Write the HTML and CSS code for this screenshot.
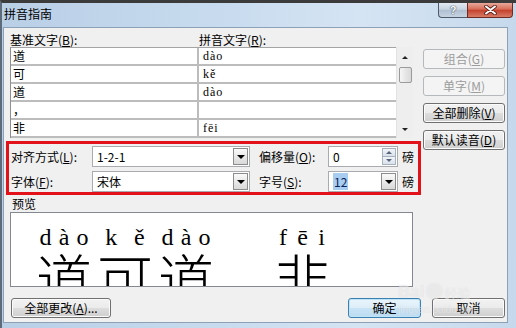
FILE: index.html
```html
<!DOCTYPE html>
<html lang="zh-CN">
<head>
<meta charset="utf-8">
<title>拼音指南</title>
<link rel="stylesheet" href="styles.css">
</head>
<body>
<div class="window">
  <div class="titlebar">
    <span class="title">拼音指南</span>
    <div class="caption">
      <div class="cap cap-help">?</div>
      <div class="cap cap-close">
        <svg width="13" height="10" viewBox="0 0 13 10">
          <path d="M2 1.5 L11 8.5 M11 1.5 L2 8.5" stroke="#5a2018" stroke-width="3.6" stroke-linecap="round"/>
          <path d="M2 1.5 L11 8.5 M11 1.5 L2 8.5" stroke="#ffffff" stroke-width="2" stroke-linecap="round"/>
        </svg>
      </div>
    </div>
  </div>
  <div class="frame">
    <div class="client">
      <div class="top">
        <div class="list-area">
          <div class="col-labels">
            <span class="lab-base">基准文字(<u>B</u>):</span>
            <span>拼音文字(<u>R</u>):</span>
          </div>
          <div class="list">
            <div class="cells">
              <div class="cell">道</div><div class="cell py">dào</div>
              <div class="cell">可</div><div class="cell py">kě</div>
              <div class="cell">道</div><div class="cell py">dào</div>
              <div class="cell">，</div><div class="cell py"></div>
              <div class="cell">非</div><div class="cell py">fēi</div>
            </div>
            <div class="vscroll">
              <div class="sb-up"><span class="tri-up"></span></div>
              <div class="sb-thumb"></div>
              <div class="sb-fill"></div>
              <div class="sb-down"><span class="tri-down"></span></div>
            </div>
          </div>
        </div>
        <div class="side">
          <div class="btn disabled">组合(<u>G</u>)</div>
          <div class="btn disabled">单字(<u>M</u>)</div>
          <div class="btn">全部删除(<u>V</u>)</div>
          <div class="btn">默认读音(<u>D</u>)</div>
        </div>
        <div class="options">
          <div class="opt-row">
            <span class="opt-label">对齐方式(<u>L</u>):</span>
            <div class="combo"><span class="combo-text">1-2-1</span><span class="drop"></span></div>
            <span class="opt-label2">偏移量(<u>O</u>):</span>
            <div class="spin"><span class="combo-text">0</span>
              <span class="spin-btns"><span class="sp"><span class="tri-s-up"></span></span><span class="sp"><span class="tri-s-down"></span></span></span>
            </div>
            <span class="unit">磅</span>
          </div>
          <div class="opt-row">
            <span class="opt-label">字体(<u>F</u>):</span>
            <div class="combo"><span class="combo-text">宋体</span><span class="drop"></span></div>
            <span class="opt-label2">字号(<u>S</u>):</span>
            <div class="spin"><span class="combo-text"><span class="sel">12</span></span><span class="drop"></span></div>
            <span class="unit">磅</span>
          </div>
          <div class="redbox"></div>
        </div>
      </div>
      <div class="preview-label">预览</div>
      <div class="preview">
        <div class="ruby-line">
          <div class="rb"><div class="rt"><span>d</span><span>à</span><span>o</span></div><div class="rc">道</div></div>
          <div class="rb"><div class="rt"><span>k</span><span>ě</span></div><div class="rc">可</div></div>
          <div class="rb"><div class="rt"><span>d</span><span>à</span><span>o</span></div><div class="rc">道</div></div>
          <div class="rb comma"><div class="rt"></div><div class="rc">，</div></div>
          <div class="rb"><div class="rt"><span>f</span><span>ē</span><span>i</span></div><div class="rc">非</div></div>
        </div>
      </div>
      <div class="bottom">
        <div class="btn btn-all">全部更改(<u>A</u>)...</div>
        <div class="btn btn-ok">确定</div>
        <div class="btn btn-cancel">取消</div>
      </div>
    </div>
  </div>
  <div class="watermark">
    <div class="wm-top"><span class="wm-bai">Bai</span><span class="wm-paw">●</span><span class="wm-jy">经验</span></div>
    <div class="wm-url">jingyan.baidu.com</div>
  </div>
</div>
</body>
</html>
```
FILE: styles.css
```css
* { box-sizing: border-box; }
html, body { margin: 0; padding: 0; }
body {
  width: 516px; height: 328px; overflow: hidden;
  background: #c4d7eb;
  font-family: "Noto Sans CJK SC", "Noto Sans", sans-serif;
  font-size: 12px; color: #000;
}
u { text-decoration: underline; text-underline-offset: 1px; }

.window {
  position: relative;
  width: 516px; height: 328px;
  display: flex; flex-direction: column;
  border-top: 3px solid #3b3b3b;
  border-left: 2px solid #5d6b7a;
  background: linear-gradient(90deg, #b9cfe6 0%, #c9dcef 45%, #d5e4f3 70%, #c6d9ec 100%);
}

/* title bar */
.titlebar { height: 24px; display: flex; justify-content: space-between; align-items: flex-start; }
.title { padding: 4px 0 0 2px; line-height: 14px; color: #000; }
.caption { display: flex; margin-right: 3px; }
.cap { height: 15px; display: flex; align-items: center; justify-content: center; }
.cap-help {
  width: 29px;
  border: 1px solid #4c5a6c; border-top: none; border-right: none;
  border-radius: 0 0 0 4px;
  background: linear-gradient(#e2e9f1, #c8d4e1 45%, #afbfd1 50%, #c6d3e1);
  font-family: "Liberation Sans", sans-serif; font-weight: bold; font-size: 11px;
  color: #fff; text-shadow: 0 0 1px #2f3c4c, 0 0 1px #2f3c4c;
  line-height: 15px;
}
.cap-close {
  width: 46px;
  border: 1px solid #6e2b21; border-top: none;
  border-radius: 0 0 4px 0;
  background: linear-gradient(#e8a99c, #d76c57 45%, #c4402b 50%, #d77c66);
}

/* frame */
.frame { flex: 1; display: flex; padding: 0 8px 5px 1px; }
.client {
  flex: 1;
  background: #f0f0f0;
  border: 1px solid #8da1b6;
  padding: 4px 2px 0 6px;
  display: flex; flex-direction: column;
}

/* top section */
.top {
  display: grid;
  grid-template-columns: 406px 82px;
  column-gap: 7px;
}
.list-area { grid-column: 1; grid-row: 1; }
.col-labels { display: flex; height: 15px; line-height: 15px; }
.lab-base { width: 189px; }

.list { display: flex; width: 403px; height: 91px; }
.cells {
  width: 386px; height: 91px;
  display: grid;
  grid-template-columns: 186px 197px;
  grid-auto-rows: 16px;
  gap: 2px;
  background: #bcbcbc;
  border-left: 1px solid #8f8f8f;
  border-top: 1px solid #a4a4a4;
  padding-bottom: 2px;
}
.cell { background: #fff; line-height: 16px; padding-left: 2px; white-space: nowrap; }
.cell.py { font-family: "Liberation Serif", serif; font-size: 12px; padding-left: 4px; letter-spacing: 1px; }

.vscroll {
  width: 17px; height: 91px;
  display: flex; flex-direction: column;
  background: #eeeeee;
  border-left: 1px solid #e2e2e2;
}
.sb-up { height: 20px; display: flex; align-items: center; justify-content: center; }
.sb-down { height: 17px; display: flex; align-items: center; justify-content: center; }
.sb-fill { flex: 1; }
.sb-thumb {
  height: 16px; margin: 0 1px 0 2px;
  border: 1px solid #9a9a9a; border-radius: 2px;
  background: linear-gradient(90deg, #f6f6f6, #e6e6e6 50%, #d9d9d9);
}
.tri-up { width: 0; height: 0; border-left: 3px solid transparent; border-right: 3px solid transparent; border-bottom: 3px solid #222; }
.tri-down { width: 0; height: 0; border-left: 3px solid transparent; border-right: 3px solid transparent; border-top: 3px solid #222; }

.side {
  grid-column: 2; grid-row: 1 / 3;
  display: flex; flex-direction: column; gap: 7px;
  padding-top: 17px;
}

/* buttons */
.btn {
  height: 20px;
  border: 1px solid #707070; border-radius: 3px;
  background: linear-gradient(#f2f2f2 0%, #ebebeb 50%, #dddddd 50%, #cfcfcf 100%);
  box-shadow: inset 0 0 0 1px #fbfbfb;
  line-height: 18px; text-align: center; white-space: nowrap;
}
.btn.disabled {
  border-color: #b5b9bc;
  background: #f4f4f4;
  box-shadow: none;
  color: #9c9c9c;
}

/* options */
.options { grid-column: 1; grid-row: 2; margin-top: 8px; position: relative; display: flex; flex-direction: column; gap: 4px; }
.opt-row { display: flex; align-items: center; height: 21px; }
.opt-label { width: 82px; padding-left: 1px; line-height: 15px; }
.opt-label2 { width: 78px; padding-left: 9px; line-height: 15px; }
.combo, .spin {
  height: 21px;
  display: flex; align-items: center;
  background: #fff;
  border: 1px solid #a9abb0;
}
.combo { width: 158px; }
.spin { width: 70px; }
.combo-text { padding-left: 4px; line-height: 15px; }
.sel { background: #a9cdf1; color: #0b2357; padding: 0 1px; }
.drop {
  width: 15px; height: 17px; margin: 0 1px 0 auto;
  border: 1px solid #8c8c8c;
  background: linear-gradient(#fafafa, #e9e9e9 50%, #d9d9d9);
  display: flex; align-items: center; justify-content: center;
}
.drop::after {
  content: ""; width: 0; height: 0;
  border-left: 4px solid transparent; border-right: 4px solid transparent;
  border-top: 4px solid #000;
  margin-top: 1px;
}
.spin-btns {
  width: 14px; height: 17px; margin: 0 1px 0 auto;
  display: flex; flex-direction: column;
  border: 1px solid #a7b2bf;
}
.sp {
  flex: 1; display: flex; align-items: center; justify-content: center;
  background: linear-gradient(#f2f5f9, #d9e1ea);
}
.sp + .sp { border-top: 1px solid #a7b2bf; }
.tri-s-up { width: 0; height: 0; border-left: 3px solid transparent; border-right: 3px solid transparent; border-bottom: 3px solid #56657a; }
.tri-s-down { width: 0; height: 0; border-left: 3px solid transparent; border-right: 3px solid transparent; border-top: 3px solid #56657a; }
.unit { margin-left: 4px; line-height: 15px; }

.redbox {
  position: absolute;
  left: -4px; top: -5px;
  width: 415px; height: 54px;
  border: 3px solid #e3121a;
  pointer-events: none;
}

/* preview */
.preview-label { margin-top: 4px; height: 16px; line-height: 16px; padding-left: 2px; }
.preview {
  width: 403px; height: 75px;
  background: #fff;
  border: 1px solid #828790;
  overflow: hidden;
  padding: 12px 0 0 25px;
}
.ruby-line { display: flex; gap: 5px; }
.rb { width: 56px; display: flex; flex-direction: column; }
.rb.comma { width: 50px; }
.rt {
  height: 24px; line-height: 24px;
  display: flex; justify-content: space-around;
  font-family: "Liberation Serif", serif; font-size: 24px;
}
.rc {
  height: 37px; overflow: hidden;
  line-height: 56px;
  font-size: 56px;
  font-weight: 300;
  font-family: "Noto Sans CJK SC Light", "Noto Sans CJK SC", sans-serif;
}

/* bottom buttons */
.bottom { display: flex; margin-top: 11px; gap: 11px; }
.btn-all { width: 100px; margin-left: 1px; }
.btn-ok {
  width: 73px; margin-left: auto;
  border-color: #3c7fb1;
  box-shadow: inset 0 0 0 1px #bfe3f7;
  background: linear-gradient(#eaf5fc 0%, #dcedf9 50%, #c9e3f5 50%, #bcdcf2 100%);
}
.btn-cancel { width: 73px; }

/* watermark overlay */
.watermark {
  position: absolute; left: 396px; top: 270px;
  color: rgba(255, 255, 255, 0.55);
  text-shadow: 0 0 1px rgba(0, 0, 0, 0.12);
  pointer-events: none;
}
.wm-top { display: flex; align-items: flex-end; height: 28px; }
.wm-bai { font-family: "Liberation Sans", sans-serif; font-weight: bold; font-size: 17px; line-height: 18px; }
.wm-paw { font-size: 18px; line-height: 22px; margin: 0 1px; }
.wm-jy { font-size: 13px; line-height: 16px; }
.wm-url { font-family: "Liberation Sans", sans-serif; font-size: 10px; line-height: 12px; margin-top: 3px; }
```
